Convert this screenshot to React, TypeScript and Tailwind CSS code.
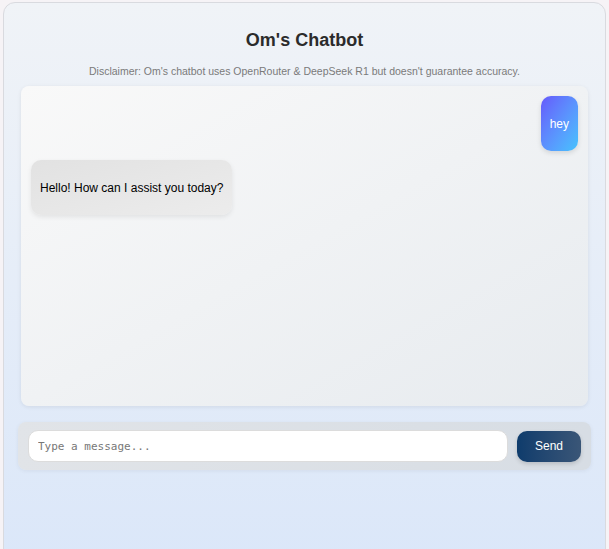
import React from 'react';

const App: React.FC = () => {
  const messages = [
    { id: 1, from: 'user', text: 'hey' },
    { id: 2, from: 'bot', text: 'Hello! How can I assist you today?' },
  ];

  return (
    <div className="w-full h-[549px] overflow-hidden bg-[#f6f3f6] pl-[3px] pr-[3px] pt-[2px] font-['Liberation_Sans',Arial,sans-serif]">
      {/* Card */}
      <div className="h-[560px] rounded-t-[12px] border border-[#d9dadf] bg-gradient-to-b from-[#f0f3f7] to-[#dbe7f9] pt-[26px] px-[17px]">
        <h1 className="text-center text-[18px] font-bold text-[#2b2b2b] leading-[22px]">Om's Chatbot</h1>
        <p className="mt-[13px] text-center text-[10.5px] text-[#7a7a7a] leading-[14px]">
          Disclaimer: Om's chatbot uses OpenRouter &amp; DeepSeek R1 but doesn't guarantee accuracy.
        </p>

        {/* Chat window */}
        <div className="mt-[8px] h-[320px] rounded-[8px] bg-gradient-to-br from-[#f9f9f9] to-[#e7ebef] shadow-[0_1px_4px_rgba(0,0,0,0.08)] px-[10px] pt-[10px] flex flex-col gap-[9px]">
          {messages.map((m) =>
            m.from === 'user' ? (
              <div key={m.id} className="flex justify-end">
                <div className="h-[55px] px-[9px] flex items-center rounded-[10px] bg-gradient-to-br from-[#6558fb] to-[#45c2fd] text-white text-[12px] font-medium shadow-[0_2px_5px_rgba(0,0,0,0.12)]">
                  {m.text}
                </div>
              </div>
            ) : (
              <div key={m.id} className="flex justify-start">
                <div className="h-[55px] px-[9px] whitespace-nowrap flex items-center rounded-[10px] bg-gradient-to-br from-[#e2e2e2] to-[#ececec] text-black text-[12px] shadow-[0_2px_5px_rgba(0,0,0,0.08)]">
                  {m.text}
                </div>
              </div>
            )
          )}
        </div>

        {/* Input bar */}
        <div className="mt-[16px] -mx-[3px] h-[48px] rounded-[8px] bg-gradient-to-r from-[#e1e4e8] to-[#d7dde4] shadow-[0_1px_4px_rgba(0,0,0,0.06)] px-[10px] flex items-center gap-[9px]">
          <input
            type="text"
            placeholder="Type a message..."
            className="flex-1 h-[32px] rounded-[10px] bg-white border border-[#dcdcdc] px-[9px] text-[11px] font-['DejaVu_Sans_Mono',monospace] placeholder:text-[#777] outline-none"
          />
          <button className="h-[31px] w-[64px] rounded-[10px] bg-gradient-to-r from-[#0e3c6c] to-[#3a5677] text-white text-[12px] font-medium shadow-[0_2px_4px_rgba(0,0,0,0.15)]">
            Send
          </button>
        </div>
      </div>
    </div>
  );
};

export default App;
